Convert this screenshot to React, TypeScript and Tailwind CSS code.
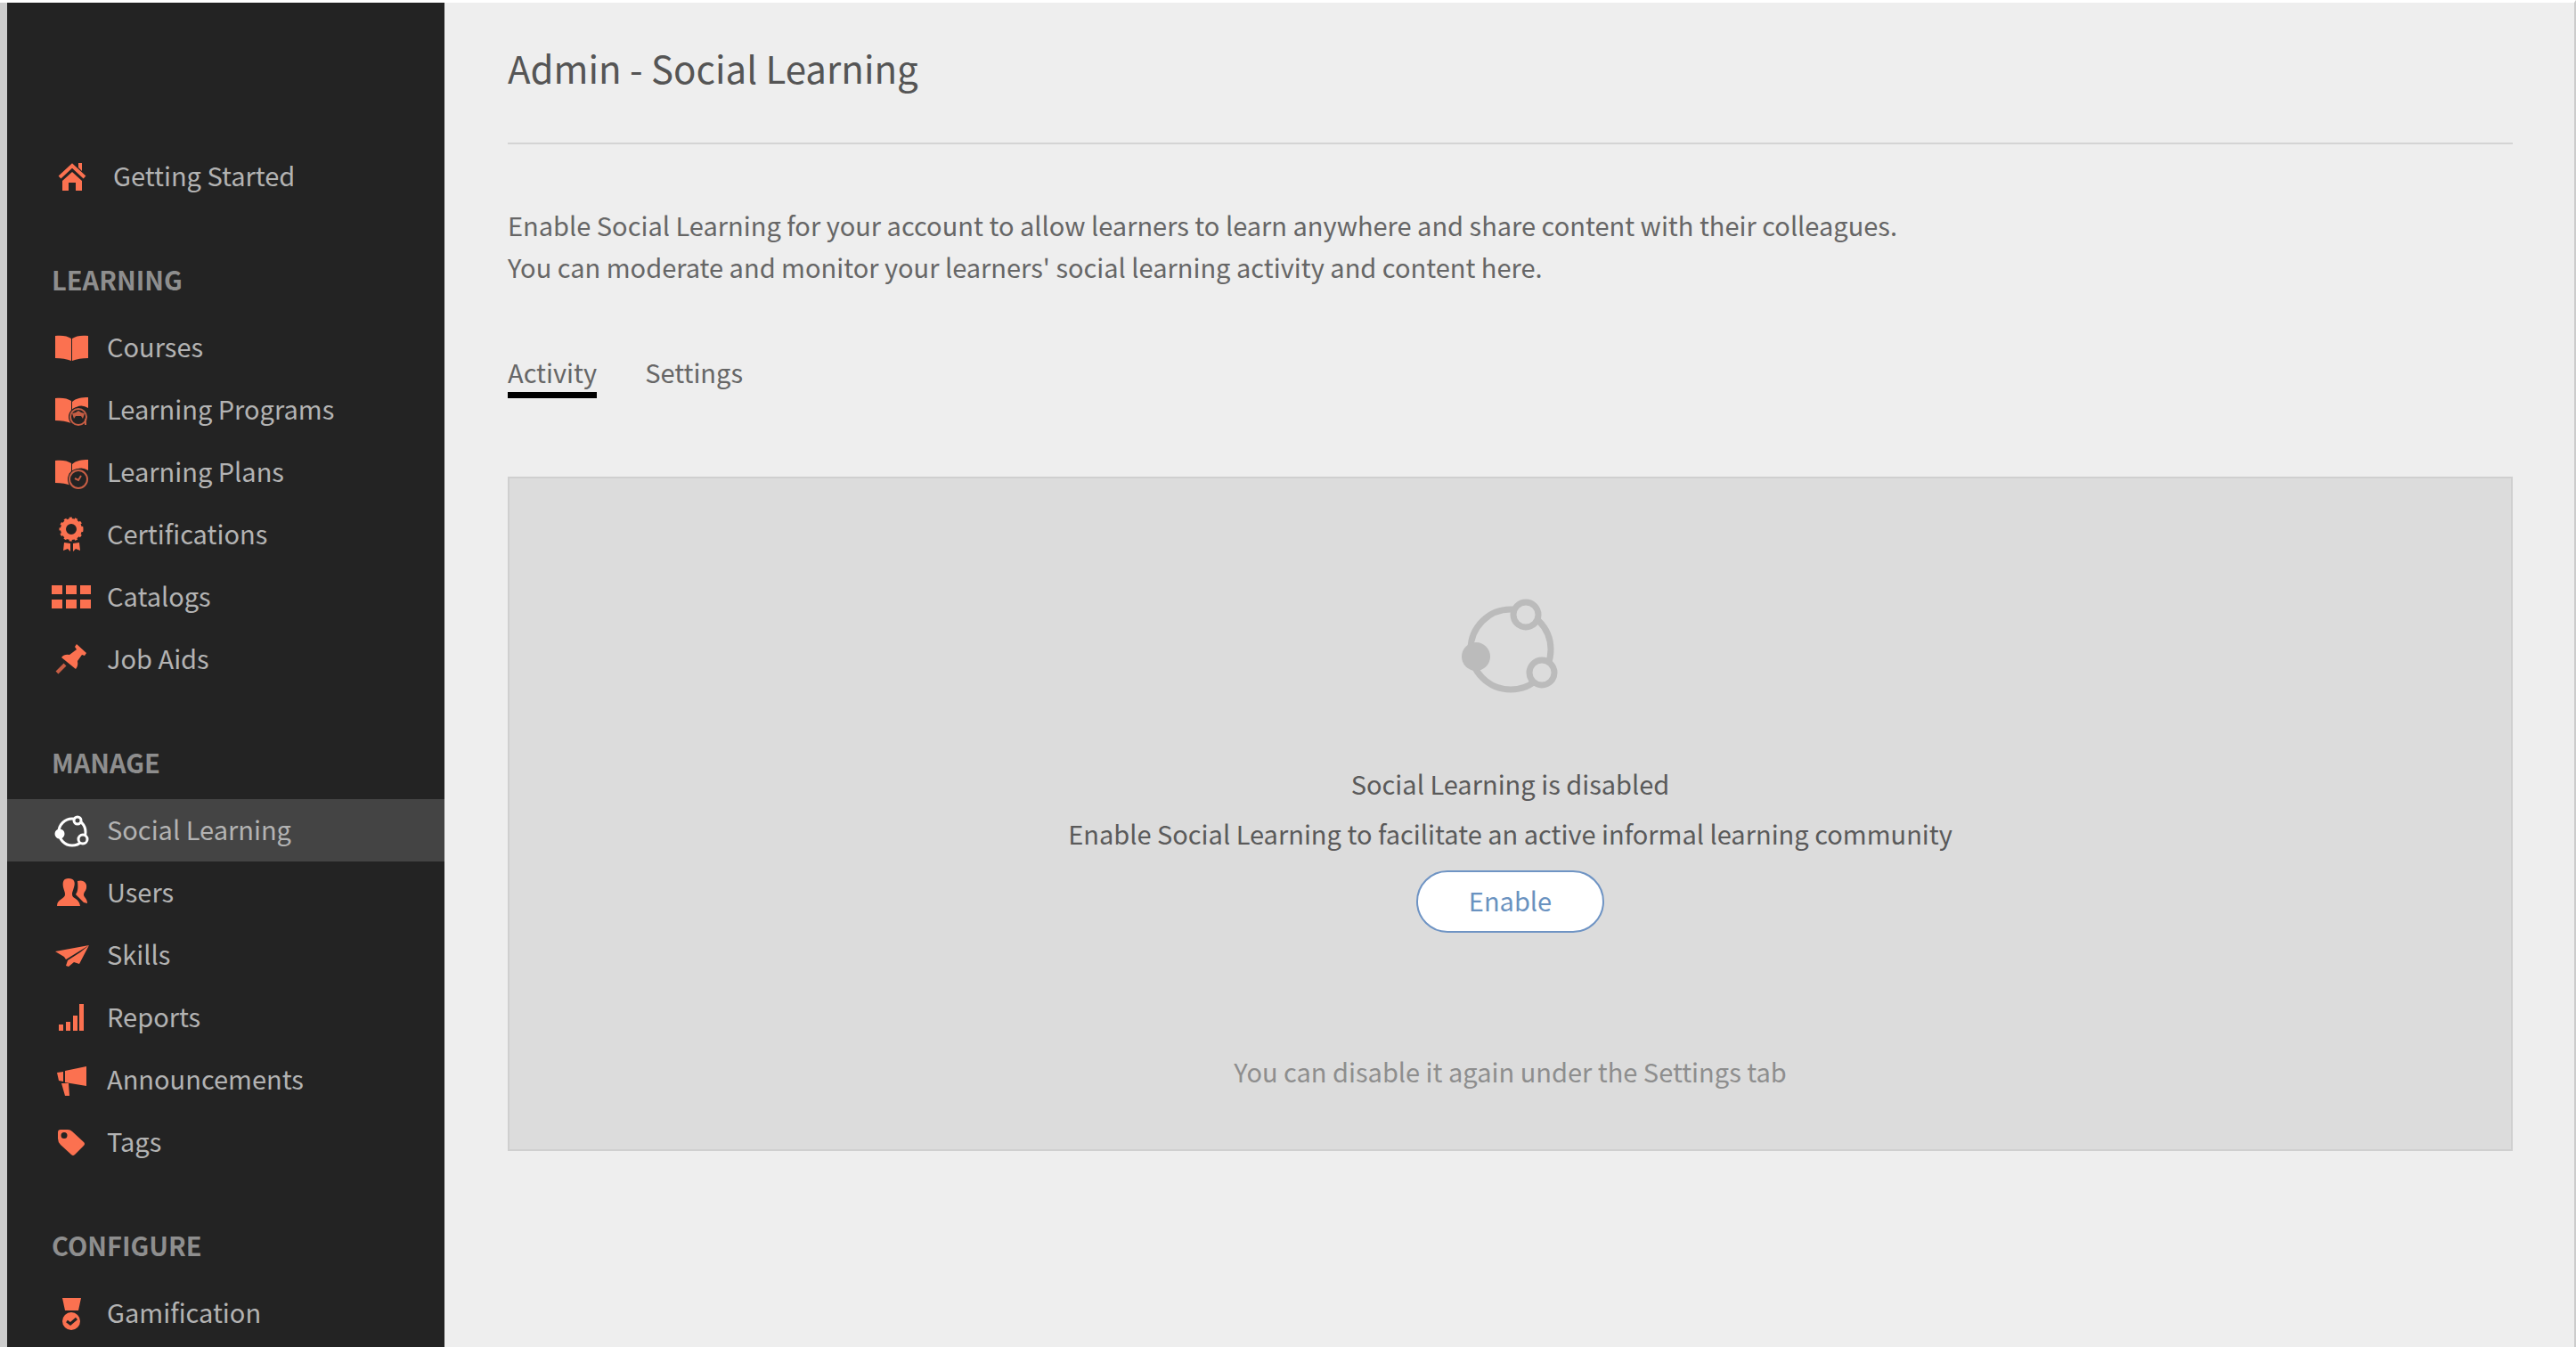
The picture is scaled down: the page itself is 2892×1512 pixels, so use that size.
import type { ReactNode } from "react";

const BOOK_LEFT = "M4 10C11 9 18 10 22 13V38C17 36 11 35 4 35Z";

const icons: Record<string, ReactNode> = {
  home: (
    <g>
      <path d="M9 24L23 11L37 24" fill="none" stroke="currentColor" strokeWidth="4" />
      <path d="M30 8H34V17L30 13Z" />
      <path d="M23 18L34 28V39H27V30H19V39H12V28Z" />
    </g>
  ),
  book: (
    <g>
      <path d={BOOK_LEFT} />
      <path d="M41 10C34 9 27 10 23 13V38C28 36 34 35 41 35Z" />
    </g>
  ),
  program: (
    <g>
      <path d={BOOK_LEFT} />
      <path d="M41 9C34 9 27 10 23 14V23Q32 15 41 21Z" />
      <circle cx="30" cy="31" r="11" className="fill-[#232323]" />
      <g opacity="0.75">
        <circle cx="30" cy="31" r="9" fill="none" stroke="currentColor" strokeWidth="2" />
        <path d="M23 27L27 26L30 24L33 26L37 27L35 33L33 30H27L25 33Z" />
        <path d="M38 33V40" stroke="currentColor" strokeWidth="2" />
      </g>
    </g>
  ),
  plan: (
    <g>
      <path d={BOOK_LEFT} />
      <path d="M41 9C34 9 27 10 23 14V23Q32 15 41 21Z" />
      <circle cx="30" cy="31" r="12" className="fill-[#232323]" />
      <g fill="none" stroke="currentColor" strokeWidth="2" opacity="0.75">
        <circle cx="30" cy="31" r="10" />
        <path d="M26 30L30 32L33 27" />
      </g>
    </g>
  ),
  certificate: (
    <g>
      <circle cx="22" cy="17" r="9" fill="none" stroke="currentColor" strokeWidth="6" />
      <circle cx="22" cy="17" r="12" fill="none" stroke="currentColor" strokeWidth="3" strokeDasharray="3 3" />
      <path d="M14 32L21 33V42L18 39L13 41ZM31 32L24 33V42L27 39L32 41Z" />
    </g>
  ),
  grid: <path d="M0 10H12V20H0ZM16 10H28V20H16ZM32 10H44V20H32ZM0 26H12V36H0ZM16 26H28V36H16ZM32 26H44V36H32Z" />,
  pin: (
    <g>
      <path d="M28 6L39 16L37 19L34 18L29 25Q30 31 27 34L11 21Q14 17 20 18L28 12L26 9Z" />
      <path d="M6 38L15 29" stroke="currentColor" strokeWidth="4" opacity="0.75" />
    </g>
  ),
  users: (
    <g>
      <path d="M19 7C25 7 27 11 25 17C24 21 23 22 23 25C23 30 31 29 32 38H6C6 30 15 30 15 25C15 22 14 21 13 17C12 11 13 7 19 7Z" />
      <path d="M29 10C36 8 40 12 39 18C38 22 36 22 36 26C37 29 40 30 40 35L36 34L27 25C29 22 30 19 29 10Z" />
    </g>
  ),
  plane: (
    <g>
      <path d="M4 19L42 12L16 28L14 25Z" />
      <path d="M42 12L31 33L25 31L19 36L16 35L18 29L32 20Z" />
    </g>
  ),
  bars: <path d="M8 31H13V38H8ZM16 28H21V38H16ZM24 21H29V38H24ZM31 8H36V38H31Z" />,
  megaphone: <path d="M6 15L13 14V25L8 24ZM15 13L39 8V30L15 26ZM11 27L19 27L20 41H15Z" />,
  tag: (
    <path
      fillRule="evenodd"
      d="M7 12Q7 9 10 9H18Q21 9 23 11L36 23Q38 25 36 27L26 37Q24 39 22 37L10 26Q7 23 7 19ZM14 12A3 3 0 1 0 14 19A3 3 0 1 0 14 12Z"
    />
  ),
  medal: (
    <g>
      <path d="M12 6H33L30 20H15Z" />
      <circle cx="22" cy="32" r="10" />
      <path d="M17 32L21 35L28 29" fill="none" className="stroke-[#232323]" strokeWidth="3" />
    </g>
  ),
  social: (
    <g stroke="currentColor" strokeWidth="3">
      <circle cx="23" cy="25" r="15" fill="none" />
      <g className="fill-[#444444]">
        <circle cx="29" cy="12" r="4" />
        <circle cx="35" cy="33" r="5" />
      </g>
      <circle cx="9" cy="27" r="4" />
    </g>
  ),
};

function Icon({ name }: { name: string }) {
  return (
    <svg viewBox="0 0 46 46" fill="currentColor" aria-hidden="true" className="size-[46px] shrink-0">
      {icons[name]}
    </svg>
  );
}

type Item = { label: string; icon: string; active?: boolean };

const sections: { title: string; items: Item[] }[] = [
  {
    title: "LEARNING",
    items: [
      { label: "Courses", icon: "book" },
      { label: "Learning Programs", icon: "program" },
      { label: "Learning Plans", icon: "plan" },
      { label: "Certifications", icon: "certificate" },
      { label: "Catalogs", icon: "grid" },
      { label: "Job Aids", icon: "pin" },
    ],
  },
  {
    title: "MANAGE",
    items: [
      { label: "Social Learning", icon: "social", active: true },
      { label: "Users", icon: "users" },
      { label: "Skills", icon: "plane" },
      { label: "Reports", icon: "bars" },
      { label: "Announcements", icon: "megaphone" },
      { label: "Tags", icon: "tag" },
    ],
  },
  { title: "CONFIGURE", items: [{ label: "Gamification", icon: "medal" }] },
];

function Sidebar() {
  return (
    <nav className="w-[491px] shrink-0 bg-[#232323] pt-[160px] text-[#b3b3b3]">
      <a href="#getting-started" className="flex h-[70px] items-center gap-[23px] pl-[50px]">
        <span className="text-[#fb7150]">
          <Icon name="home" />
        </span>
        <span className="pb-1">Getting Started</span>
      </a>
      {sections.map((section) => (
        <section key={section.title}>
          <h2 className="mt-[60px] mb-[22px] pl-[50px] font-bold text-[#8e8e8e]">{section.title}</h2>
          <ul>
            {section.items.map((item) => (
              <li key={item.label}>
                <a
                  href={"#" + item.label.toLowerCase().replace(" ", "-")}
                  aria-current={item.active ? "page" : undefined}
                  className={
                    item.active
                      ? "flex h-[70px] items-center gap-4 bg-[#444444] pl-[50px]"
                      : "flex h-[70px] items-center gap-4 pl-[50px]"
                  }
                >
                  <span className={item.active ? "text-white" : "text-[#fb7150]"}>
                    <Icon name={item.icon} />
                  </span>
                  <span className="pb-1">{item.label}</span>
                </a>
              </li>
            ))}
          </ul>
        </section>
      ))}
    </nav>
  );
}

export default function App() {
  return (
    <div className="flex min-h-screen border-t-3 border-r-2 border-t-white border-r-[#cccccc] bg-[#eeeeee] font-['Noto_Sans_CJK_SC',sans-serif] text-[29px] leading-10">
      <div className="w-2 shrink-0 bg-[#cccccc]" />
      <Sidebar />
      <main className="min-w-0 grow pr-[69px] pl-[71px] text-[#666666]">
        <h1 className="border-b-2 border-[#d4d4d4] pt-[45px] pb-[56px] text-[42px] leading-[56px] text-[#555555]">
          Admin - Social Learning
        </h1>
        <p className="mt-[67px] leading-[47px]">
          Enable Social Learning for your account to allow learners to learn anywhere and share content with their
          colleagues.
          <br />
          You can moderate and monitor your learners' social learning activity and content here.
        </p>
        <div role="tablist" className="mt-[74px] flex items-start gap-[54px]">
          <button role="tab" aria-selected="true" className="border-b-7 border-black pb-[3px]">
            Activity
          </button>
          <button role="tab" aria-selected="false">
            Settings
          </button>
        </div>
        <section className="mt-[88px] flex flex-col items-center border-2 border-[#cfcfcf] bg-[#dcdcdc] pt-[135px] pb-[68px] text-center">
          <svg
            viewBox="1 0 110 106"
            className="h-[106px] w-[110px] text-[#bbbbbb]"
            stroke="currentColor"
            strokeWidth="7"
            aria-hidden="true"
          >
            <circle cx="56" cy="57" r="45" fill="none" />
            <g className="fill-[#dcdcdc]">
              <circle cx="73" cy="18" r="14" />
              <circle cx="91" cy="83" r="14" />
            </g>
            <circle cx="17" cy="65" r="16" fill="currentColor" stroke="none" />
          </svg>
          <p className="mt-[81px] text-[#5a5a5a]">Social Learning is disabled</p>
          <p className="mt-4 text-[#5a5a5a]">Enable Social Learning to facilitate an active informal learning community</p>
          <button className="mt-[22px] h-[70px] rounded-full border-2 border-[#6f94c4] bg-white px-[57px] pb-1 text-[#6a92c0]">
            Enable
          </button>
          <p className="mt-[135px] text-[#8e8e8e]">You can disable it again under the Settings tab</p>
        </section>
      </main>
    </div>
  );
}
